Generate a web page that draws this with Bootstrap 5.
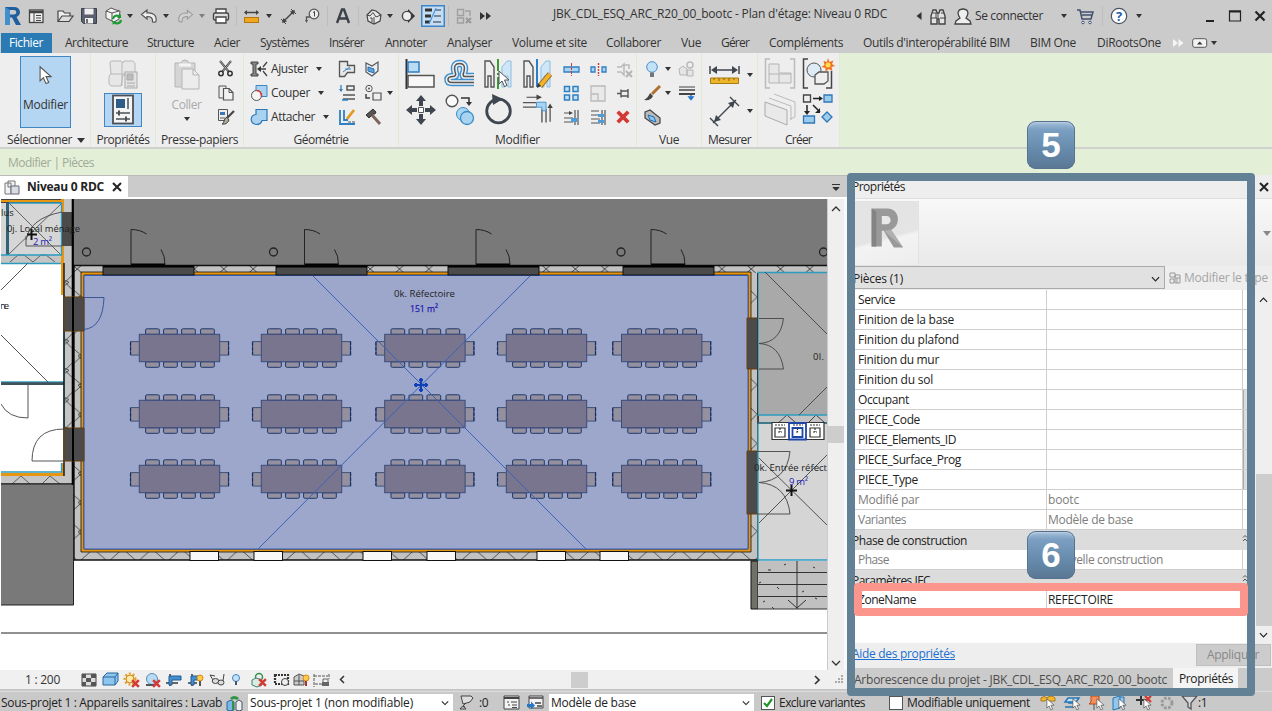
<!DOCTYPE html>
<html lang="fr">
<head>
<meta charset="utf-8">
<meta name="viewport" content="width=device-width, initial-scale=1">
<title>Plan d'étage: Niveau 0 RDC</title>
<link href="https://cdn.jsdelivr.net/npm/bootstrap@5.3.0/dist/css/bootstrap.min.css" rel="stylesheet">
<style>
body{width:1272px;height:711px;overflow:hidden;font:12px/16px "Open Sans","Noto Sans",sans-serif;color:#333;background:#cbcbcb}
svg{display:block;overflow:visible;flex:none}
[data-w]{white-space:nowrap;display:inline-block;justify-self:start}
.titlebar{height:32px;padding-left:4px;display:grid;align-items:center;grid-template-columns:24px 28px 24px 24px 23px 13px 23px 14px 22px 13px 24px 7px 23px 14px 24px 23px 9px 22px 8px 21px 13px 21px 27px 8px 23px 74px 362px 14px 25px 21px 86px 15px 26px 8px 26px 69px 23px 26px 18px;background:#cbcbcb}
.caret{width:0;height:0;border:3px solid transparent;border-top:4px solid #333;border-bottom:0;display:block}
.vsep{width:1px;height:20px;background:#bdbdbd}
.tabrow{height:21px;display:grid;align-items:center;padding-left:1px;grid-template-columns:64px 82px 67px 46px 69px 56px 62px 65px 94px 75px 40px 48px 94px 167px 67px 75px 20px 19px 1fr}
.tabrow .filetab{background:#2a7ab4;color:#fff;width:51px;height:20px;padding:2px 0 0 8px}
.ribbon{height:96px;background:#e4efd7;border-bottom:2px solid #cfd1ce}
.pane{background:#eee;border-right:1px solid #e0ebd3;height:94px;padding-top:3px}
.pane-title{height:16px;margin-top:auto;margin-bottom:-1px;text-align:center}
.tools{height:75px}
.on{background:#b5d6f2;border:1px solid #4087c4}
.big{display:grid;grid-template-columns:repeat(4,39px);grid-auto-rows:36px;padding:2px 0 0 6px}
.small3{display:grid;grid-template-columns:repeat(3,26.5px);grid-auto-rows:24px;align-items:center;padding-top:1px}
.small2{display:grid;grid-template-columns:repeat(2,25px);grid-auto-rows:24px;align-items:center;padding-top:1px}
.optbar{height:26px;background:#e4efd7;color:#a0aa98;padding:6px 0 0 8px}
.doc{width:848px}
.doctabs{height:24px;background:#cbcbcb;border-top:1px solid #bbb;border-bottom:2px solid #fff}
.doctab{width:128px;background:#fff;color:#222;padding:1px 0 0 4px}
.plan{width:827px;height:471px;background:#fff;overflow:hidden}
.vscroll{width:16px;background:#efefef;margin-left:1px}
.viewbar{height:20px;background:#f0f0f0;border-bottom:1px solid #c4c4c4;display:grid;align-items:center;padding-left:25px;grid-template-columns:56px 21px 21px 22px 20px 22px 22px 22px 20px 22px 20px 20px 26px 232px 243px 21px 1fr}
.props{width:424px;background:#eee;color:#222}
.prev{height:68px;background:linear-gradient(#f8f8f8,#e9e9e9);border-top:1px solid #ddd}
.thumb{width:67px;border:1px solid #e3e3e3;background:linear-gradient(165deg,#e4e4e4 55%,#f3f3f3 60%,#ededed)}
.sel{width:317px;background:#e1e1e1;border:1px solid #aaa;padding:2px 0 0 4px}
.rows{width:400px;background:#fff;padding-left:6px}
.prow{height:20px;border-bottom:1px solid #cfcfcf;display:grid;grid-template-columns:193px 196px 1fr;line-height:19px}
.prow>*{border-right:1px solid #cfcfcf;padding-left:4px}
.prow>:nth-child(2){padding-left:1px}
.prow>:last-child{border:0}
.prow.dim{color:#7d7d7d}
.prow.bt>:last-child{background:#ddd;border-left:1px solid #aaa}
.phead{height:20px;background:#dcdcdc;line-height:21px;margin-left:-6px;padding-left:4px}
.frame1{left:847px;top:173px;width:408px;height:523px;border:8px solid #638195;border-radius:4px}
.frame2{left:854px;top:583px;width:394px;height:33px;border:8px solid #fc958c;border-radius:4px}
.key{left:1027px;width:48px;height:48px;border-radius:9px;background:linear-gradient(#a9c2dc,#7b9fc2 18%,#6488a9 65%,#5a7793);box-shadow:inset 0 0 0 1px #55738f,inset 0 2px 2px #bdd0e4;color:#fff;font:bold 35px/48px "Liberation Sans",sans-serif;text-align:center}
.k5{top:121px}.k6{top:531px}
.status{height:20px;border-top:1px solid #dcdcdc;background:#c9c9c9;display:grid;align-items:center;padding:2px 0 0 1px;color:#222;grid-template-columns:225px 22px 211px 20px 24px 24px 22px 212px 18px 110px 18px 133px 24px 24px 24px 24px 24px 21px 17px 1fr}
.combo{height:18px;background:#fff;width:205px;padding:0 4px 0 2px}
.cb{width:14px;height:14px;background:#fff;border:1px solid #555}
</style>
</head>
<body>
<svg width="0" height="0" class="position-absolute">
<defs>
<symbol id="cur" viewBox="0 0 12 18"><path d="M1 1v13l3-3 2.500 5.500 2.500-1L6.500 10H11z" fill="#fff" stroke="#555"/></symbol>
<symbol id="redx" viewBox="0 0 8 8"><path d="M1 1l6 6M7 1L1 7" stroke="#d33a35" stroke-width="2.200"/></symbol>
<symbol id="chev" viewBox="0 0 10 6"><path d="M1 1l4 4 4-4" fill="none" stroke="currentColor" stroke-width="1.300"/></symbol>
<symbol id="fold" viewBox="0 0 6 8"><path d="M1 3.500l2-2 2 2M1 7l2-2 2 2" fill="none" stroke="#555"/></symbol>
<pattern id="hx" width="29.3" height="9" x="182.500" y="265" patternUnits="userSpaceOnUse"><path d="M7.500 8l9-8M16.500 8l-9-8" stroke="#333" stroke-width=".9" fill="none"/></pattern>
<pattern id="hb" width="29.3" height="9" x="81" y="551" patternUnits="userSpaceOnUse"><path d="M0 9L10 0h5l10 9" stroke="#333" stroke-width=".8" fill="none"/></pattern>
<pattern id="hv" width="9" height="29.3" x="74" y="344" patternUnits="userSpaceOnUse"><path d="M0 5l8 7-8 7M8 10l-4 2 4 3" stroke="#333" stroke-width=".8" fill="none"/></pattern>
<pattern id="hl" width="9" height="29.3" x="64" y="329" patternUnits="userSpaceOnUse"><path d="M8 5l-7 7 7 7M1 10l4 2-4 3" stroke="#333" stroke-width=".8" fill="none"/></pattern>
<pattern id="hr" width="9" height="29.3" x="749" y="285" patternUnits="userSpaceOnUse"><path d="M0 4l8 8-8 8" stroke="#333" stroke-width=".8" fill="none"/></pattern>
<g id="seat"><path d="M.3 5.500V.8Q.3 0 2 0h10q2 0 2 .8v4.700z" fill="#94909f" stroke="#1e3769" stroke-width="1"/></g>
<g id="tbl">
<use href="#seat" x="6" y="-5.500"/><use href="#seat" x="24" y="-5.500"/><use href="#seat" x="42" y="-5.500"/><use href="#seat" x="61" y="-5.500"/>
<g transform="translate(0 33) scale(1 -1)"><use href="#seat" x="6"/><use href="#seat" x="24"/><use href="#seat" x="42"/><use href="#seat" x="61"/></g>
<path d="M0 7.300h-8.700v13.500H0M80.400 7.300h8.700v13.500h-8.700" fill="#94909f" stroke="#35486f" stroke-width=".9"/><path d="M-8.800 7.500v13M89.300 7v14" stroke="#132d65" stroke-width="1.200" stroke-dasharray="4 1"/>
<rect width="80.400" height="27.400" fill="#79758f" stroke="#3a4c7b"/>
</g>
<g id="door"><path d="M0 35V0q9 0 15.500 4.500M30 20q4 6 4 15" fill="none" stroke="#222"/><path d="M0 35h34" stroke="#000" stroke-width="2"/></g>
<g id="win"><rect width="91" height="9" fill="#4b4b4b" stroke="#111"/><path d="M0 .5h91" stroke="#000" stroke-width="2"/></g>
</defs></svg>

<header class="titlebar">
<svg width="18" height="20" viewBox="0 0 18 20"><path d="M1 1h9c7 0 8 8 2.500 10L17 19h-5L8 11.500H6V19H1z" fill="#1e5fa0"/><path d="M6 4h4c3 0 3 4.500 0 4.500H6z" fill="#cbcbcb"/><path d="M1 1l5 3v15H1z" fill="#3f8fcf"/></svg>
<svg width="17" height="17" viewBox="0 0 17 17"><rect x="1.500" y="2" width="13.500" height="12.500" fill="#eee" stroke="#444" stroke-width="1.300"/><path d="M1.500 4h13.500" stroke="#444" stroke-width="2.500"/><path d="M6 5v9M8 7.500h5M8 10h5M8 12.500h5" stroke="#444"/></svg>
<svg width="18" height="16" viewBox="0 0 18 16"><path d="M2 13V3h5l1.500 2H14v3" fill="#eee" stroke="#444" stroke-width="1.200"/><path d="M2 13.500L6 8h11l-4 5.500z" fill="#ddd" stroke="#444" stroke-width="1.200"/></svg>
<svg width="18" height="18" viewBox="0 0 18 18"><path d="M1.500 1.500h15v15h-13l-2-2z" fill="#5a6070" stroke="#3b404a"/><path d="M4.500 1.500h9v6h-9zM5 11h8v5.500H5z" fill="#eee"/><path d="M7 12v4" stroke="#444" stroke-width="1.500"/></svg>
<svg width="19" height="18" viewBox="0 0 19 18"><path d="M2 4l5-3 5 2 4 1-1 8-5 3-8-4z" fill="#f4f4f4" stroke="#555"/><path d="M2 4l6 2 7-2M8 6v8" stroke="#555" fill="none"/><path d="M9 12a4 4 0 017-2M17 13a4 4 0 01-7 2" stroke="#1d9a36" stroke-width="2.200" fill="none"/><path d="M17 7v4h-4zM8.500 18v-4h4z" fill="#1d9a36"/></svg>
<i class="caret"></i>
<svg width="18" height="16" viewBox="0 0 18 16"><path d="M1.500 6.500L7 2v3c6-.5 10 2 9 8.500-1.500 1-2.500 1-3.500.3C13 10 11 8.500 7 8.500V11z" fill="#eee" stroke="#555" stroke-width="1.200"/></svg>
<i class="caret"></i>
<svg width="17" height="16" viewBox="0 0 18 16"><path d="M16.500 6.500L11 2v3C5 4.500 1 7 2 13.500c1.500 1 2.500 1 3.500.3C5 10 7 8.500 11 8.500V11z" fill="#d2d2d2" stroke="#999" stroke-width="1.100"/></svg>
<i class="caret opacity-50"></i>
<svg width="18" height="18" viewBox="0 0 18 18"><path d="M4 6V2h10v4" fill="#fff" stroke="#444" stroke-width="1.300"/><rect x="1.500" y="6" width="15" height="7" rx="1.500" fill="#ddd" stroke="#444" stroke-width="1.400"/><path d="M4 10h10v6H4z" fill="#fff" stroke="#444" stroke-width="1.300"/></svg>
<i class="vsep"></i>
<svg width="17" height="16" viewBox="0 0 17 16"><path d="M2 4.500h13" stroke="#444" stroke-width="1.500"/><path d="M4 2L1 4.500 4 7zM13 2l3 2.500L13 7z" fill="#444"/><rect x="1.500" y="9.500" width="14" height="5" fill="#f0a61e" stroke="#b5770c"/></svg>
<i class="caret"></i>
<svg width="17" height="17" viewBox="0 0 17 17"><path d="M3 14L14 3" stroke="#444" stroke-width="1.500"/><path d="M1 11l5 5M11 1l5 5" stroke="#444"/><path d="M2 15l1.500-5 3.500 3.500zM15 2l-1.500 5L10 3.500z" fill="#444"/></svg>
<svg width="16" height="17" viewBox="0 0 16 17"><circle cx="10" cy="6" r="4.800" fill="#eee" stroke="#555" stroke-width="1.200"/><path d="M10.500 3.500v5M9 4.500l1.500-1" stroke="#444"/><path d="M1 12l1.500 3L4 12z" fill="#555"/><path d="M6 9H2.500v4" stroke="#555" fill="none" stroke-width="1.300"/></svg>
<i class="vsep"></i>
<svg width="14" height="16" viewBox="0 0 14 16"><path d="M1 15L6 1.500h2L13 15M3 10.500h8" fill="none" stroke="#3c4048" stroke-width="2.400"/></svg>
<i class="vsep"></i>
<svg width="16" height="17" viewBox="0 0 16 17"><path d="M1 7l5-5 4 1 5 4-1 6-6 3-6-3z" fill="#e8e8e8" stroke="#444" stroke-width="1.200"/><path d="M1 7l3 1 3-3.500 3 4.500 5-2M8 16V9M4 10h2v4" stroke="#444" fill="none"/></svg>
<i class="caret"></i>
<svg width="16" height="16" viewBox="0 0 16 16"><path d="M8 1l7 7-7 7z" fill="#333"/><circle cx="7" cy="8" r="4.600" fill="#eee" stroke="#444" stroke-width="1.400"/></svg>
<svg width="24" height="22" viewBox="0 0 24 22"><rect x=".75" y=".75" width="22.500" height="20.500" fill="#c5def5" stroke="#3f84c6" stroke-width="1.500"/><path d="M4 5h7M4 11h6M4 17h5" stroke="#333" stroke-width="3"/><path d="M14 5h6M13 11h7M12 17h8" stroke="#333" stroke-width="1.200"/><path d="M15 3L8 19" stroke="#4c9ade" stroke-width="1.200"/></svg>
<i class="vsep"></i>
<svg width="17" height="17" viewBox="0 0 17 17"><path d="M1.500 1.500h6v6h-6zM1.500 10h6v5h-6zM9 3h5v5" fill="none" stroke="#a0a0a0" stroke-width="1.400"/><path d="M10 10l5 5M15 10l-5 5" stroke="#999" stroke-width="2"/></svg>
<svg width="12" height="8" viewBox="0 0 12 8"><path d="M1 0l5 4-5 4zM7 0l5 4-5 4z" fill="#333"/></svg>
<span data-w="334" class="mb-1">JBK_CDL_ESQ_ARC_R20_00_bootc - Plan d'étage: Niveau 0 RDC</span>
<svg width="8" height="8" viewBox="0 0 8 8"><path d="M6.500 0v8l-5-4z" fill="#333"/></svg>
<svg width="19" height="17" viewBox="0 0 19 17"><path d="M2 16V8l2-6h3l1 3h2l1-3h3l2 6v8h-6v-5H8v5z" fill="#e3e3e3" stroke="#444" stroke-width="1.400"/><path d="M2 10h6M11 10h6M4 5h3v5M12 5h3M9 5v6" stroke="#444" fill="none"/></svg>
<svg width="18" height="17" viewBox="0 0 18 17"><path d="M6 10C2 4 5 1 9 1s7 3 3 9l4 3 1 3H1l1-3z" fill="#eee" stroke="#444" stroke-width="1.300"/></svg>
<span data-w="68">Se connecter</span>
<i class="caret"></i>
<svg width="18" height="17" viewBox="0 0 18 17"><path d="M1 2h3l2 9h9l2-7H5M6 7h10" fill="none" stroke="#435070" stroke-width="1.500"/><circle cx="7" cy="14.500" r="1.300" fill="#fff" stroke="#435070"/><circle cx="14" cy="14.500" r="1.300" fill="#fff" stroke="#435070"/></svg>
<i class="vsep"></i>
<svg width="18" height="18" viewBox="0 0 18 18"><circle cx="9" cy="9" r="7.700" fill="#fff" stroke="#4a5262" stroke-width="1.200"/><text x="9" y="13.500" font-size="13" font-weight="700" fill="#2460b0" text-anchor="middle">?</text></svg>
<i class="caret"></i>
<svg width="10" height="12" viewBox="0 0 10 12"><path d="M1 11h8" stroke="#222" stroke-width="2"/></svg>
<svg width="14" height="14" viewBox="0 0 14 14"><path d="M1.500 2h11v10h-11z" fill="none" stroke="#222" stroke-width="1.200"/><path d="M1 2.500h12" stroke="#222" stroke-width="2"/></svg>
<svg width="12" height="12" viewBox="0 0 12 12"><path d="M1.500 1.500l9 9M10.500 1.500l-9 9" stroke="#222" stroke-width="2.200"/></svg>
</header>

<nav class="tabrow">
<div class="filetab"><span data-w="34">Fichier</span></div>
<span data-w="63">Architecture</span><span data-w="47">Structure</span><span data-w="26">Acier</span><span data-w="49">Systèmes</span><span data-w="35">Insérer</span><span data-w="42">Annoter</span><span data-w="45">Analyser</span><span data-w="75">Volume et site</span><span data-w="55">Collaborer</span><span data-w="20">Vue</span><span data-w="28">Gérer</span><span data-w="74">Compléments</span><span data-w="147">Outils d'interopérabilité BIM</span><span data-w="46">BIM One</span><span data-w="64">DiRootsOne</span>
<svg width="12" height="8" viewBox="0 0 12 8"><path d="M1 0l5 4-5 4zM6.500 0l5 4-5 4z" fill="#f6f6f6"/></svg>
<svg width="16" height="10" viewBox="0 0 16 10"><rect x=".7" y=".7" width="14" height="8.600" rx="2" fill="#f3f3f3" stroke="#555"/><path d="M5 6.500h5.500L7.700 3.500z" fill="#333"/></svg>
<i class="caret ms-0"></i>
</nav>

<section class="ribbon d-flex">
<div class="pane d-flex flex-column" style="width:91px">
<div class="tools"><div class="on d-flex flex-column align-items-center" style="width:51px;height:72px;margin-left:20px"><svg class="mt-2" width="13" height="21"><use href="#cur"/></svg><span data-w="45" style="margin-top:11px">Modifier</span></div></div>
<div class="pane-title d-flex align-items-center" style="padding-left:7px"><span data-w="65">Sélectionner</span><i class="caret" style="margin-left:5px;border-width:5px 4px 0"></i></div></div>
<div class="pane d-flex flex-column align-items-center" style="width:65px">
<div class="tools d-flex flex-column align-items-center pt-1"><svg width="30" height="30" viewBox="0 0 30 30"><path d="M2 3q0-2 2-2h9l2 2 1-2h9l2 2v10l-2 2H15l-2 11H3l-2-2V16l2-2z" fill="#e7e7e7" stroke="#b8b8b8"/><path d="M2 14h25M14 2v24" stroke="#b8b8b8"/><rect x="17" y="12" width="12" height="16" fill="#e3e3e3" stroke="#aaa"/><path d="M19 14h6v6h-6zM19 23h8M19 26h8" stroke="#aaa" fill="#bbb"/></svg>
<div class="on mt-1 d-flex justify-content-center" style="width:38px;height:34px;margin-top:3px!important"><svg width="22" height="31" viewBox="0 0 22 31"><rect x="1" y="1.500" width="20" height="28" fill="#f4f4f4" stroke="#4c5057" stroke-width="1.800"/><path d="M4 5h9v9H4z" fill="#2f5b88"/><path d="M16 4v11M4 19h14M4 25h14" stroke="#4c5057" stroke-width="1.500"/><path d="M7 16.500v5M14 22.500v5" stroke="#4c5057" stroke-width="2"/></svg></div></div>
<div class="pane-title"><span data-w="53">Propriétés</span></div></div>
<div class="pane d-flex flex-column align-items-center" style="width:88px">
<div class="tools d-flex w-100"><div class="d-flex flex-column align-items-center" style="width:61px;padding-top:3px;color:#aaa"><svg width="28" height="32" viewBox="0 0 28 32"><path d="M2 4h6q1-3 4-3t4 3h6v24H2z" fill="#d5d5d5" stroke="#b5b5b5"/><path d="M6 6h12" stroke="#f4f4f4" stroke-width="3"/><path d="M9 10h11l6 6v14H9z" fill="#ececec" stroke="#b5b5b5"/><path d="M20 10v6h6" fill="none" stroke="#b5b5b5"/></svg><span data-w="30" style="margin-top:6px">Coller</span><i class="caret mt-1"></i></div>
<div class="small2" style="grid-template-columns:24px"><svg width="18" height="18" viewBox="0 0 18 18"><path d="M3 1l9 11M14 1L5 12" stroke="#444" stroke-width="2"/><path d="M3 1l9 11M14 1L5 12" stroke="#ddd" stroke-width=".6"/><circle cx="4" cy="13.500" r="2.200" fill="none" stroke="#333" stroke-width="1.500"/><circle cx="13" cy="13.500" r="2.200" fill="none" stroke="#333" stroke-width="1.500"/></svg>
<svg width="18" height="18" viewBox="0 0 18 18"><path d="M2 2h7v12H2z" fill="#eee" stroke="#555"/><path d="M6.500 4.500H12l4 4V16H6.500z" fill="#f2f2f2" stroke="#555" stroke-width="1.200"/><path d="M12 4.500v4h4" stroke="#555" fill="none"/></svg>
<svg width="18" height="18" viewBox="0 0 18 18"><path d="M1.500 1.500h9v11h-9z" fill="#eee" stroke="#555"/><path d="M3 4h5v3H3z" fill="#3a78b5"/><path d="M3 10h5" stroke="#555"/><path d="M17 3L9 11" stroke="#444" stroke-width="2.200"/><path d="M10 9l2 3q-2 5-7 4 2-1 2-3t3-4z" fill="#a9a9a0" stroke="#444"/></svg></div></div>
<div class="pane-title"><span data-w="77">Presse-papiers</span></div></div>
<div class="pane d-flex flex-column align-items-center" style="width:155px">
<div class="tools d-flex w-100">
<div class="small2" style="grid-template-columns:21px 67px;padding-left:6px">
<svg width="18" height="18" viewBox="0 0 18 18"><path d="M1 2h7v2H6v10h2v2H1v-2h2V4H1z" fill="#888" stroke="#444"/><path d="M17 2l-4 5M17 16l-4-5M9 9h7" stroke="#444" stroke-width="1.300"/><path d="M11 6v6L7 9z" fill="#333"/></svg>
<div class="d-flex align-items-center gap-2"><span data-w="37">Ajuster</span><i class="caret"></i></div>
<svg width="18" height="18" viewBox="0 0 18 18"><path d="M6 1.500h11v11H6z" fill="#a9d2f0" stroke="#3d85c0"/><circle cx="6.500" cy="11.500" r="5" fill="#f5f5f5" stroke="#555"/><path d="M6.500 6.500q5 0 5 6" stroke="#d33" stroke-width="1.500" fill="none"/></svg>
<div class="d-flex align-items-center gap-2"><span data-w="39">Couper</span><i class="caret"></i></div>
<svg width="18" height="18" viewBox="0 0 18 18"><path d="M6 1.500h11v11h-5q-1 4-5.500 4Q1 16 1.200 11 1.500 7 6 6.500z" fill="#a9d2f0" stroke="#2f78b8" stroke-width="1.200"/></svg>
<div class="d-flex align-items-center gap-2"><span data-w="44">Attacher</span><i class="caret"></i></div></div>
<div class="small2" style="grid-template-columns:26px 23px 12px">
<svg width="18" height="18" viewBox="0 0 18 18"><path d="M1.500 1.500h8v4h7v7h-7l-3 4h-5z" fill="#e9e9e9" stroke="#555" stroke-width="1.300"/><path d="M5 12l7-5M7 9h6" stroke="#3d85c0"/></svg>
<svg width="18" height="18" viewBox="0 0 18 18"><path d="M2 3l6 3 6-4v9l-6 5-6-4z" fill="#e8eef4" stroke="#555" stroke-width="1.200"/><path d="M4 7l6 2v4l-6-2z" fill="#5aa5e0" stroke="#2b6ca8"/></svg><i></i>
<svg width="18" height="18" viewBox="0 0 18 18"><path d="M5 11h12M5 15h12M9 2h7v4H9z" stroke="#555" stroke-width="1.500" fill="none"/><path d="M3 1v6M4 16h6" stroke="#2c80c8" stroke-width="1.300"/><path d="M1 5l2 3 2-3z" fill="#2c80c8"/></svg>
<svg width="18" height="18" viewBox="0 0 18 18"><circle cx="5" cy="4.500" r="3.200" fill="#eee" stroke="#555"/><circle cx="5" cy="4.500" r="1" fill="#555"/><path d="M9 9h8v7H9z" fill="#eee" stroke="#555" stroke-width="1.200"/><path d="M2 10v4h4" fill="none" stroke="#444" stroke-width="1.500"/></svg><i class="caret"></i>
<svg width="18" height="18" viewBox="0 0 18 18"><path d="M2 2v14h15M6 2v10h4" stroke="#2c80c8" stroke-width="1.800" fill="none"/><path d="M16 2l-7 9" stroke="#e29a22" stroke-width="2.800"/><path d="M10 14h7" stroke="#555" stroke-dasharray="3 1"/></svg>
<svg width="18" height="18" viewBox="0 0 18 18"><path d="M2 7l7-6 3 3-1 2-2 0-4 4z" fill="#555" stroke="#333"/><path d="M8 7l8 9" stroke="#7c6659" stroke-width="3"/></svg></div></div>
<div class="pane-title"><span data-w="55">Géométrie</span></div></div>
<div class="pane d-flex flex-column align-items-center" style="width:238px">
<div class="tools d-flex w-100"><div class="big">
<svg width="32" height="32" viewBox="0 0 32 32"><path d="M1.500 1v30" stroke="#333" stroke-width="2"/><path d="M3 4h11v10H3z" fill="#b9dcf4" stroke="#2f7fc0" stroke-width="1.500"/><path d="M3 17.500h26V29H3z" fill="#f7f7f7" stroke="#555" stroke-width="1.500"/></svg>
<svg width="32" height="32" viewBox="0 0 32 32"><g fill="none"><path id="off" d="M30 18.500h-9q-3 0-1-5 2-8-4.500-8t-4.500 8q2 5-2 5-5 0-5 3T8 24.500h22" stroke="#3f92d0" stroke-width="7.500"/><path d="M31 18.500H21q-3 0-1-5 2-8-4.500-8t-4.500 8q2 5-2 5-5 0-5 3T8 24.500h23" stroke="#eee" stroke-width="4.600"/><path d="M30 18.500h-9q-3 0-1-5 2-8-4.500-8t-4.500 8q2 5-2 5-5 0-5 3T8 24.500h22" stroke="#555" stroke-width="1.500"/></g></svg>
<svg width="32" height="32" viewBox="0 0 32 32"><path d="M2 3h5l4 6v20H8V18H5v11H2z" fill="#eee" stroke="#555" stroke-width="1.400"/><path d="M28 3h-4l-5 6v20h3V18h3v11h3z" fill="#cfe6f6" stroke="#8cbde0"/><path d="M15 1v30" stroke="#3a9a34" stroke-width="2" stroke-dasharray="12 2 2 2"/><use href="#cur" x="15" y="12" width="12" height="18"/></svg>
<svg width="32" height="32" viewBox="0 0 32 32"><path d="M2 3h5l4 6v20H8V18H5v11H2z" fill="#eee" stroke="#555" stroke-width="1.400"/><path d="M28 3h-4l-5 6v20h3V18h3v11h3z" fill="#cfe6f6" stroke="#8cbde0"/><path d="M15 1v28" stroke="#2b7fc8" stroke-width="2"/><path d="M28 16L18 28" stroke="#8a5a10" stroke-width="5.500"/><path d="M28 16L18 28" stroke="#f2b32c" stroke-width="4"/><path d="M15 30l1-5 3 3z" fill="#333"/></svg>
<svg width="32" height="32" viewBox="0 0 32 32"><path d="M16 1l5 6h-3v5h-4V7h-3zM16 31l5-6h-3v-5h-4v5h-3zM1 16l6-5v3h5v4H7v3zM31 16l-6-5v3h-5v4h5v3z" fill="#3f464f"/><path d="M13.500 13.500h5v5h-5z" fill="#fff" stroke="#555"/></svg>
<svg width="32" height="32" viewBox="0 0 32 32"><circle cx="8" cy="7" r="5.800" fill="#fafafa" stroke="#555" stroke-width="1.400"/><circle cx="19" cy="20" r="6.500" fill="#a8d4f1" stroke="#3d8bc6"/><circle cx="23" cy="24" r="6.500" fill="#a8d4f1" stroke="#3d8bc6" stroke-width="1.300"/><path d="M17 4h8v6" stroke="#333" stroke-width="1.500" fill="none"/><path d="M22 8h6l-3 4z" fill="#333"/></svg>
<svg width="32" height="32" viewBox="0 0 32 32"><circle cx="15.500" cy="17" r="11.800" fill="none" stroke="#3f464f" stroke-width="2.800"/><path d="M9 0l11 5-10 6z" fill="#3f464f"/></svg>
<svg width="29" height="30" viewBox="0 0 32 32"><path d="M1 9h15M1 14h15M22 16v15M26.500 16v15" stroke="#555" stroke-width="1.500"/><path d="M16 8.500h10.500V18H22v-4h-6z" fill="#a8d4f1" stroke="#3f92d0"/><path d="M5 3h14M31 30V13" stroke="#444" stroke-width="1.300"/><path d="M16 0l6 3-6 3zM28 15l3-5 3 5z" fill="#444"/></svg>
</div><div class="small3 ps-1" style="margin-left:-2px">
<svg width="17" height="17" viewBox="0 0 17 17"><path d="M1 6h15v5H1z" fill="#a8d4f1" stroke="#2f7fc0" stroke-width="1.300"/><path d="M8.500 2v13" stroke="#d33a35" stroke-dasharray="3 1"/></svg>
<svg width="17" height="17" viewBox="0 0 17 17"><path d="M1 6h4v5H1zM12 6h4v5h-4z" fill="#a8d4f1" stroke="#2f7fc0" stroke-width="1.300"/><path d="M8.500 2v13" stroke="#d33a35" stroke-width="1.400" stroke-dasharray="2 1"/></svg>
<svg width="17" height="17" viewBox="0 0 17 17"><path d="M1 6h4l3-3v11l-3-3H1M8 4h5v4" stroke="#bbb" stroke-width="1.500" fill="none"/><path d="M10 10l6 6M16 10l-6 6" stroke="#b5b5b5" stroke-width="2"/></svg>
<svg width="17" height="17" viewBox="0 0 17 17"><path d="M1.500 1.500h5v5h-5zM10 1.500h5v5h-5zM1.500 10h5v5h-5zM10 10h5v5h-5z" fill="#c5e1f5" stroke="#2f7fc0" stroke-width="1.500"/></svg>
<svg width="17" height="17" viewBox="0 0 17 17"><path d="M1 1h14v15H1zM1 9h7v7" stroke="#bbb" stroke-width="1.300" fill="#e9e9e9"/></svg>
<svg width="17" height="17" viewBox="0 0 17 17"><path d="M1 8.500h4M5 4.500v8M5 6h7M5 11h7M12 4v9" stroke="#555" stroke-width="1.400" fill="none"/></svg>
<svg width="17" height="17" viewBox="0 0 17 17"><path d="M1 4h6M1 9h9M1 13h9M15 1v15M12 1v15" stroke="#555" stroke-width="1.200"/><path d="M8 9h6v4H8z" fill="#4e9ddb"/><path d="M6 2l4 2-4 2z" fill="#444"/></svg>
<svg width="17" height="17" viewBox="0 0 17 17"><path d="M1 2h8M1 6h9M1 10h9M1 14h9M15 1v15M12 1v15" stroke="#555" stroke-width="1.200"/><path d="M8 5h6v3H8zM8 11h6v3H8z" fill="#4e9ddb"/></svg>
<svg width="14" height="14" viewBox="0 0 8 8"><use href="#redx"/></svg>
</div></div><div class="pane-title"><span data-w="45">Modifier</span></div></div>
<div class="pane d-flex flex-column align-items-center" style="width:65px">
<div class="tools w-100"><div class="small2" style="grid-template-columns:21px 13px 20px;padding-left:7px">
<svg width="17" height="17" viewBox="0 0 17 17"><circle cx="8" cy="6" r="5.300" fill="#c2e2fa" stroke="#4a90c8"/><path d="M6 11.500h4V16H6z" fill="#777"/></svg><i class="caret"></i>
<svg width="18" height="17" viewBox="0 0 18 17"><path d="M1 8l4-3 4 3v6H2zM9 9h6v6H9z" fill="#e5e5e5" stroke="#b5b5b5"/><circle cx="12" cy="4" r="3" fill="none" stroke="#bbb" stroke-width="1.500"/></svg>
<svg width="17" height="17" viewBox="0 0 17 17"><path d="M16 1L8 9" stroke="#b0702f" stroke-width="3"/><path d="M6 8l3 3q-2 5-9 4 4-2 6-7z" fill="#444"/></svg><i class="caret"></i>
<svg width="18" height="17" viewBox="0 0 18 17"><path d="M1 2h16" stroke="#444"/><path d="M1 5h16" stroke="#444" stroke-width="1.500"/><path d="M1 9h16" stroke="#444" stroke-width="2"/><path d="M13 10v3M11 12h4l-2 2.500z" fill="#2276cc" stroke="#2276cc" stroke-width="1.500"/></svg>
<svg width="17" height="17" viewBox="0 0 17 17"><path d="M1 3l5-2 10 8v5l-5 2L1 9z" fill="#bbb" stroke="#444" stroke-width="1.200"/><path d="M4 6l6 2 2 5-6-2z" fill="#8cc4ee" stroke="#1f6fb4"/></svg></div></div>
<div class="pane-title"><span data-w="20">Vue</span></div></div>
<div class="pane d-flex flex-column align-items-center" style="width:56px">
<div class="tools w-100 small2" style="grid-template-columns:38px 10px;grid-auto-rows:36px;padding-left:7px">
<svg width="31" height="20" viewBox="0 0 31 20"><path d="M1 1v8M30 1v8M4 5h23" stroke="#3f464f" stroke-width="1.500"/><path d="M8 1L2 5l6 4zM23 1l6 4-6 4z" fill="#3f464f"/><path d="M1.500 13h28v5.500h-28z" fill="#eeb42a" stroke="#a87a12"/><path d="M5 13v2M10 13v3M15 13v2M20 13v3M25 13v2" stroke="#8a6208"/></svg><i class="caret"></i>
<svg width="31" height="31" viewBox="0 0 31 31"><path d="M4 27L27 4M1 22l8 8M21 1l9 9" stroke="#3f464f" stroke-width="1.400"/><path d="M5 26l2-7 5 5zM26 5l-2 7-5-5z" fill="#3f464f"/></svg><i class="caret"></i></div>
<div class="pane-title"><span data-w="43">Mesurer</span></div></div>
<div class="pane d-flex flex-column align-items-center" style="width:82px">
<div class="tools w-100 big" style="grid-template-columns:38px 38px">
<svg width="32" height="32" viewBox="0 0 32 32"><path d="M6 1H1.500v29H6M26 1h4.500v29H26" fill="none" stroke="#bbb" stroke-width="1.500"/><path d="M5 6h10v9h12v10H5z" fill="#e7e7e7" stroke="#b5b5b5"/><path d="M5 16h10v9M15 16h12" stroke="#b5b5b5" fill="none"/></svg>
<svg width="32" height="32" viewBox="0 0 32 32"><path d="M6 1H1.500v29H6M24 30h5.500V13" fill="none" stroke="#444" stroke-width="1.500"/><circle cx="12" cy="12" r="7" fill="#dcebf5" stroke="#555"/><path d="M13 17l4-3h9v9l-4 3h-9z" fill="#eee" stroke="#555" stroke-width="1.300"/><path d="M26 0l1.500 4 4-1.500L30 6l3 2-3.500 1 1 4-4-2-3 3v-4l-4-1 3-2-1-4 3.500 1z" fill="#f27122"/><circle cx="26" cy="7" r="2.500" fill="#ffe14d"/></svg>
<svg width="32" height="32" viewBox="0 0 32 32"><path d="M10 0l21 8v15l-5 2M5 4l22 8v14" fill="#eee" stroke="#bbb"/><path d="M1 8l22 8v15L1 22z" fill="#e9e9e9" stroke="#aaa"/></svg>
<svg width="32" height="32" viewBox="0 0 32 32"><path d="M1.500 1h7v7h-7z" fill="#eee" stroke="#444" stroke-width="1.300"/><path d="M22 1h8v7h-8zM1.500 22h11v7h-11zM25 18l5 5-5 5-5-5z" fill="#9bcbed" stroke="#2f78b8" stroke-width="1.300"/><path d="M11 4.500h8M5 11v8M11 11l7 7" stroke="#222" stroke-width="1.500"/><path d="M17 2l4 2.500L17 7zM2 17h6l-3 4zM18 14v5h-5z" fill="#222"/></svg></div>
<div class="pane-title"><span data-w="27">Créer</span></div></div>
</section>
<div class="optbar"><span data-w="86">Modifier | Pièces</span></div>

<main class="d-flex" style="height:516px">
<section class="doc d-flex flex-column">
<div class="doctabs d-flex justify-content-between"><div class="doctab d-flex align-items-center"><svg width="16" height="15" viewBox="0 0 16 15"><path d="M1 3h6v11H1zM4 1h7v6H4z" fill="#f2f2f2" stroke="#777"/><path d="M7 6h8v8H7z" fill="#d8dde3" stroke="#667"/></svg><b data-w="77" style="margin-left:7px">Niveau 0 RDC</b><svg class="ms-2" width="10" height="10" viewBox="0 0 10 10"><path d="M1 1l8 8M9 1L1 9" stroke="#222" stroke-width="2"/></svg></div>
<svg style="margin-top:5px" width="17" height="14" viewBox="0 0 17 14"><path d="M1 3.500h8M2 6.500h6l-3 3z" fill="#333" stroke="#333"/></svg></div>
<div class="d-flex" style="height:471px">
<svg class="plan" viewBox="0 199 827 471" font-size="9.5" fill="#222">
<path d="M0 199h827v471H0z" fill="#fff"/>
<path d="M73 199h754v66H73z" fill="#797979"/>
<path d="M1 203h61v52H1z" fill="#d6d6d6"/><path d="M1 200h63v2H1z" fill="#e69610"/><path d="M1 199.500h61M1 202.500h61" stroke="#111" stroke-width=".8"/>
<path d="M64 199h9v285h-9zM1 255h63v8H1zM1 476h72v8H1z" fill="#c5c5c5"/>
<path d="M64 331h9v98h-9zM64 262h9v35h-9z" fill="url(#hl)"/>
<path d="M10 262l8-7h6l9 7 8-7h5l9 7M12 484l9-8 9 8M42 484l8-8 10 8M9 203l52 52M61 204L9 254" fill="none" stroke="#555" stroke-width=".9"/>
<path d="M61 199h3v13h-3zM61 246h3v49h-3zM1 473h63v3H1zM61 463h3v13h-3z" fill="#e69610"/>
<path d="M6 203h3v52H6z" fill="#2f6478"/><path d="M9 203h52.500v52H1M1 263.500h60M64 295v133M61.500 463v9H1M64 380v4" fill="none" stroke="#2b9cc0" stroke-width="1.300"/>
<path d="M62 212h11v34H62z" fill="#4b4b4b"/><path d="M1 382h63v3H1z" fill="#40525b"/><path d="M1 381.800h63" stroke="#2b9cc0"/>
<path d="M26 236v10h36M26 240q4-22 36-28M1 290l27-27M1 335l47 47M28 385v33q-20 0-27-14M64 429q-32 0-32 32h32" fill="none" stroke="#555"/>
<path d="M74 265h683v11H74zM74 265h10v295H74zM74 549h683v11H74zM748 265h10v295h-10z" fill="#c2c2c2"/>
<path d="M758 265h69v8h-69zM758 415h69v8h-69z" fill="#c2c2c2"/>
<path d="M74 265h753v8H74z" fill="url(#hx)"/><path d="M74 551h683v9H74z" fill="url(#hb)"/><path d="M74 276h8v270h-8z" fill="url(#hv)"/><path d="M749 276h8v274h-8z" fill="url(#hr)"/><path d="M778 423l9-8 9 8M808 423l8-8 9 8" fill="none" stroke="#444"/>
<path d="M81 272h670v280H81zM84 275v274h664V275z" fill="#e69610" fill-rule="evenodd" stroke="#111" stroke-width=".8"/>
<path d="M73 199v285M64 263v213M1 484h72M74 265.500h753M74 265v295h684V273" fill="none" stroke="#111" stroke-width="1.400"/><path d="M72.700 199v286" stroke="#000" stroke-width="2"/>
<path d="M84 275.500h664V549H84z" fill="#9da7cb" stroke="#315fbe"/>
<use href="#win" x="103" y="266"/><use href="#win" x="276" y="266"/><use href="#win" x="448" y="266"/><use href="#win" x="623" y="266"/>
<use href="#door" x="131" y="229.500"/><use href="#door" x="304.500" y="229.500"/><use href="#door" x="476" y="229.500"/><use href="#door" x="651" y="229.500"/>
<g fill="none" stroke="#222" stroke-width="1.300"><circle cx="86.500" cy="252" r="4"/><circle cx="273.500" cy="252" r="4"/><circle cx="621" cy="252" r="4"/><circle cx="823.500" cy="252" r="4"/></g>
<path d="M64 297h20v34H64zM64 428h20v33H64zM747 318h11v51h-11zM747 451h11v63h-11z" fill="#4b4b4b" stroke="#6a3e08"/><path d="M73 297v34M73 428v33" stroke="#000" stroke-width="2"/>
<path d="M84 297.500h20q-1 30-20 32" fill="none" stroke="#3b5597"/>
<g id="tables"></g>
<path d="M313 276l273 273M530 276L258 549" stroke="#3b62b8"/>
<path d="M421 378v14M414 385h14M419 380h4M419 390h4M416 383v4M426 383v4" stroke="#1040b5" stroke-width="2.200"/>
<text x="394" y="297" textLength="61" lengthAdjust="spacingAndGlyphs">0k. Réfectoire</text><text x="410" y="312" textLength="28" lengthAdjust="spacingAndGlyphs" fill="#231bad" stroke="#231bad" stroke-width=".25">151 m²</text>
<g id="sills" fill="#f8f8f8" stroke="#111"></g>
<path d="M758 272.500h69v142.500h-69z" fill="#a9a9a9"/><path d="M758 423h69v137h-69z" fill="#d5d5d5"/>
<path d="M827 272.500h-69V415h69M827 423h-69v137h69" fill="none" stroke="#2b9cc0" stroke-width="1.300"/><path d="M757 423h70M757.500 273v142" stroke="#222" stroke-width=".7"/>
<path d="M765 272l62 62M799 415l28-28M759 318.500h24.500q-3 24-24.500 25 21 1 24.500 25.500H759M757 451.500h33q-3 29-31 31 28 2 31 31.500h-33M759 458l68 67M827 455l-68 68" fill="none" stroke="#444" stroke-width=".9"/>
<g fill="#fff" stroke="#333" stroke-width="1.200"><path d="M772 422.500h52v17h-52z"/><path d="M775 428h10v9h-10zM810 428h10v9h-10z"/><path d="M789 423h17v16.500h-17zM792.500 428h10v9h-10z" stroke="#1e46a8" stroke-width="1.800"/><path d="M778 432h4M796 432h3M813 432h4M780 428v4M797.500 428v4M815 428v4M775 425h10M793 425h10M810 425h10" stroke-dasharray="2 1"/></g>
<text x="754" y="471" textLength="73" lengthAdjust="spacingAndGlyphs">0k. Entrée réfect</text><text x="789" y="485" fill="#231bad" textLength="19">9 m²</text><path d="M786 490.500h11M791.500 485v11" stroke="#111" stroke-width="2"/><text x="813" y="360" textLength="11">0l.</text>
<path d="M751 561h7v48h-7z" fill="#71716a" stroke="#111"/><path d="M758 561h69v48h-69z" fill="#c0c0c0"/><path d="M758 572.500h69M758 584.500h69M758 596.500h69M758 609h69M797 561v48M788 600l9 8 9-8" fill="none" stroke="#333"/><path d="M768 570h3M784 565l2-1M813 567l2 1M759 583l2-1M777 587l2 2M802 592l2-1M763 602l2-1M815 598l2 1M772 607l2 2" stroke="#333"/>
<path d="M1 485h72v120H1z" fill="#797979"/><path d="M1 605h72.500V485M1 633h826" fill="none" stroke="#222"/>
<text x="1" y="216">lus</text><text x="7" y="232" textLength="73" lengthAdjust="spacingAndGlyphs">0j. Local ménage</text><text x="33" y="245" fill="#231bad" textLength="19">2 m²</text><path d="M27 234.500h10M31.500 229v11" stroke="#111" stroke-width="2"/><text x="0" y="309" textLength="9">ne</text>
<path d="M.5 199v471" stroke="#fff"/>
</svg>
<div class="vscroll d-flex flex-column align-items-center"><svg width="10" height="6" style="margin-top:7px;transform:scaleY(-1)"><use href="#chev"/></svg><div style="width:16px;height:17px;margin-top:214px;background:#cdcdcd"></div><svg class="mt-auto mb-1" width="10" height="6"><use href="#chev"/></svg></div><div class="flex-fill bg-light"></div>
</div>
<div class="viewbar">
<span data-w="35">1 : 200</span>
<svg width="16" height="14" viewBox="0 0 16 14"><path d="M1 1h14v12H1z" fill="#ddd" stroke="#444"/><path d="M1 1h4v4H1zM10 1h5v4h-5zM5 5h5v4H5zM1 9h4v4H1zM10 9h5v4h-5z" fill="#555"/></svg>
<svg width="17" height="15" viewBox="0 0 17 15"><path d="M1 5l4-4h11v8l-3 4H1z" fill="#8dc5ee" stroke="#28679c"/><path d="M1 5h12v8M13 5l3-4" fill="none" stroke="#28679c"/></svg>
<svg width="17" height="16" viewBox="0 0 17 16"><circle cx="7" cy="7" r="5.500" fill="none" stroke="#e89c1a" stroke-width="2" stroke-dasharray="2 2"/><circle cx="7" cy="7" r="4" fill="#ffe9a8" stroke="#c88112"/><use href="#redx" x="8" y="7" width="9" height="9"/></svg>
<svg width="17" height="16" viewBox="0 0 17 16"><circle cx="7" cy="7" r="5.500" fill="#b8dcf5" stroke="#5a8db6"/><path d="M1 13h8" stroke="#555" stroke-width="2"/><use href="#redx" x="7" y="7" width="9" height="9"/></svg>
<svg width="17" height="16" viewBox="0 0 17 16"><path d="M5 2v12M1 11h12" stroke="#666" stroke-width="2"/><path d="M4 4h12v4H7v5H4z" fill="#438fd0" stroke="#205c93"/></svg>
<svg width="17" height="16" viewBox="0 0 17 16"><path d="M5 2v12M1 11h9" stroke="#666" stroke-width="2"/><path d="M4 4h8v4H7v5H4z" fill="#438fd0" stroke="#205c93"/><circle cx="13" cy="6" r="3" fill="#ffcb4a" stroke="#d88a12"/><path d="M13 9v5" stroke="#555" stroke-width="2"/></svg>
<svg width="17" height="16" viewBox="0 0 17 16"><path d="M1 3l3 5M1 3l5 1M15 2l-1 7" stroke="#444" fill="none"/><ellipse cx="6.500" cy="9" rx="3.300" ry="2.500" fill="#ddd" stroke="#444"/><ellipse cx="12" cy="10.500" rx="3" ry="2.500" fill="#ddd" stroke="#444"/></svg>
<svg width="10" height="15" viewBox="0 0 10 15"><circle cx="5" cy="6" r="3.500" fill="#c2e2fa" stroke="#4383bb"/><path d="M5 9v4" stroke="#456" stroke-width="2"/></svg>
<svg width="17" height="16" viewBox="0 0 17 16"><circle cx="8" cy="5" r="3.500" fill="none" stroke="#35914a" stroke-width="1.500"/><path d="M1 8l4-2 6 2v5l-5 2-5-2z" fill="#dcebdd" stroke="#387"/><use href="#redx" x="7" y="6" width="9" height="9"/></svg>
<svg width="17" height="16" viewBox="0 0 17 16"><path d="M2 3h13v9H2z" fill="none" stroke="#333" stroke-width="2.200" stroke-dasharray="2 1"/><circle cx="12" cy="10" r="3.500" fill="#eee" stroke="#444"/></svg>
<svg width="17" height="16" viewBox="0 0 17 16"><path d="M1 5l5-3 5 2v9H1zM1 9h10M6 3v10" fill="#ccc" stroke="#555"/><circle cx="13" cy="6" r="3" fill="#ffcb4a" stroke="#d88a12"/><path d="M13 9v5" stroke="#a33" stroke-width="2"/></svg>
<svg width="17" height="16" viewBox="0 0 17 16"><path d="M1 2v13M16 2v5M1 4h14M2 12h7" stroke="#555" stroke-dasharray="3 1"/><path d="M9 10h7v4H9z" fill="#666"/><path d="M10 10V7h5v3" fill="none" stroke="#666"/></svg>
<svg width="6" height="9" viewBox="0 0 6 9"><path d="M5 1L1.500 4.500 5 8" fill="none" stroke="#333" stroke-width="1.500"/></svg>
<div style="width:17px;height:16px;background:#cdcdcd"></div>
<svg width="7" height="10" viewBox="0 0 7 10"><path d="M1 1l4 4-4 4" fill="none" stroke="#333" stroke-width="1.700"/></svg>
<svg width="9" height="9" viewBox="0 0 9 9"><path d="M6 1h2M3 4h2M6 4h2M0 7h2M3 7h2M6 7h2" stroke="#aaa" stroke-width="2"/></svg>
</div></section>

<aside class="props d-flex flex-column">
<div class="d-flex align-items-center justify-content-between" style="height:23px;padding:1px 3px 0 4px"><span data-w="53">Propriétés</span><svg width="10" height="10" viewBox="0 0 10 10"><path d="M1 1l8 8M9 1L1 9" stroke="#222" stroke-width="2"/></svg></div>
<div class="prev d-flex justify-content-between align-items-center" style="padding:2px 1px 0 4px"><div class="thumb h-100 d-flex justify-content-center"><svg class="mt-1" width="37" height="44" viewBox="0 0 40 44"><path d="M5 1h17c14 0 15 19 4 23l13 19H29L18 25h-2v17H5z" fill="#999"/><path d="M5 1l5 3v38H5z" fill="#848484"/><path d="M16 9h5c6 0 6 9 0 9h-5z" fill="#e9e9e9"/><path d="M18 25l8-1 13 19z" fill="#b0b0b0"/></svg></div><i class="caret me-0" style="border-top-color:#888;border-width:5px 4px 0"></i></div>
<div class="d-flex" style="height:24px;padding-bottom:1px"><div class="sel d-flex align-items-center justify-content-between pe-1"><span data-w="50">Pièces (1)</span><svg width="9" height="6"><use href="#chev"/></svg></div><div class="d-flex align-items-center" style="color:#a5a5a5;padding-left:4px"><svg width="12" height="12" viewBox="0 0 12 12"><path d="M1 1h5v4H1zM1 7h4v4H1zM6 3h5v8H6zM6 6h5M8 6v5" fill="none" stroke="#999"/></svg><span data-w="84" style="margin-left:3px">Modifier le type</span></div></div>
<div class="d-flex" style="height:353px"><div class="rows">
<div class="prow"><div><span data-w="37">Service</span></div><div></div><div></div></div>
<div class="prow"><div><span data-w="96">Finition de la base</span></div><div></div><div></div></div>
<div class="prow"><div><span data-w="101">Finition du plafond</span></div><div></div><div></div></div>
<div class="prow"><div><span data-w="81">Finition du mur</span></div><div></div><div></div></div>
<div class="prow"><div><span data-w="75">Finition du sol</span></div><div></div><div></div></div>
<div class="prow bt"><div><span data-w="51">Occupant</span></div><div></div><div></div></div>
<div class="prow bt"><div><span data-w="62">PIECE_Code</span></div><div></div><div></div></div>
<div class="prow bt"><div><span data-w="98">PIECE_Elements_ID</span></div><div></div><div></div></div>
<div class="prow bt"><div><span data-w="103">PIECE_Surface_Prog</span></div><div></div><div></div></div>
<div class="prow bt"><div><span data-w="60">PIECE_Type</span></div><div></div><div></div></div>
<div class="prow dim"><div><span data-w="61">Modifié par</span></div><div><span data-w="31">bootc</span></div><div></div></div>
<div class="prow dim"><div><span data-w="48">Variantes</span></div><div><span data-w="85">Modèle de base</span></div><div></div></div>
<div class="phead d-flex justify-content-between"><span data-w="115">Phase de construction</span><svg class="mt-1" width="6" height="8"><use href="#fold"/></svg></div>
<div class="prow dim"><div><span data-w="31">Phase</span></div><div><span data-w="115">Nouvelle construction</span></div><div></div></div>
<div class="phead d-flex justify-content-between"><span data-w="78">Paramètres IFC</span><svg class="mt-1" width="6" height="8"><use href="#fold"/></svg></div>
<div class="prow"><div><span data-w="58">ZoneName</span></div><div><span data-w="65">REFECTOIRE</span></div><div></div></div>
</div>
<div class="d-flex flex-column align-items-center ms-auto" style="width:17px;background:#efefef"><svg width="9" height="6" style="margin-top:7px;transform:scaleY(-1)"><use href="#chev"/></svg><div style="width:16px;height:152px;margin-top:171px;background:#cdcdcd"></div><svg width="9" height="6" style="margin-top:6px"><use href="#chev"/></svg></div></div>
<div class="d-flex justify-content-between" style="height:25px;padding:1px 1px 2px 4px"><span data-w="103" style="color:#1c6fd0;text-decoration:underline;padding-top:2px">Aide des propriétés</span><div style="width:75px;background:#ccc;border:1px solid #bfbfbf;color:#888;padding:2px 0 0 10px"><span data-w="52">Appliquer</span></div></div>
<div class="d-flex align-items-center flex-fill" style="background:#cbcbcb;color:#4d4d4d"><span data-w="313" style="margin-left:6px">Arborescence du projet - JBK_CDL_ESQ_ARC_R20_00_bootc</span><div class="h-100" style="width:65px;margin-left:6px;background:#f4f4f4;color:#222;padding:3px 0 0 6px"><span data-w="54">Propriétés</span></div></div>
</aside></main>

<footer class="status">
<span data-w="221">Sous-projet 1 : Appareils sanitaires : Lavab</span>
<svg width="17" height="17" viewBox="0 0 17 17"><path d="M1 7l4-2 3 2v8l-4 1-3-1z" fill="#7ab7e6" stroke="#28679c"/><path d="M10 7l3-2 3 2v8l-3 1-3-1z" fill="#eee" stroke="#456"/><path d="M4 3q4-4 9 0l-2 2q-3-2-5 0z" fill="#2f9445"/><path d="M7 6v9" stroke="#2f9445" stroke-width="2"/></svg>
<div class="combo d-flex align-items-center justify-content-between"><span data-w="163">Sous-projet 1 (non modifiable)</span><svg width="8" height="6"><use href="#chev"/></svg></div>
<svg width="15" height="16" viewBox="0 0 15 16"><path d="M2 1h10l2 2-3 4-7 2z" fill="#ddd" stroke="#444"/><path d="M7 8L4 11l2 1M1 14q3-5 6 0z" stroke="#444" fill="#ccc"/></svg>
<span data-w="9">:0</span>
<svg width="17" height="16" viewBox="0 0 17 16"><path d="M1 1h15v13H1z" fill="#f3f3f3" stroke="#444"/><path d="M1 3h15" stroke="#444" stroke-width="2"/><path d="M4 7h2M8 7h6M5 10h2M9 10h5M9 12.500h5" stroke="#444"/></svg>
<svg width="17" height="16" viewBox="0 0 17 16"><path d="M2 1h14v12H2z" fill="#f3f3f3" stroke="#444"/><path d="M2 3h14M8 8h6M10 11h5" stroke="#444" stroke-width="1.500"/><path d="M0 9h4V6.500l4 4-4 4V12H0z" fill="#2378c8"/></svg>
<div class="combo d-flex align-items-center justify-content-between"><span data-w="85">Modèle de base</span><svg width="8" height="6"><use href="#chev"/></svg></div>
<div class="cb"><svg width="12" height="12" viewBox="0 0 12 12"><path d="M2 6l3 3 5-7" fill="none" stroke="#23962d" stroke-width="2.200"/></svg></div>
<span data-w="86">Exclure variantes</span>
<div class="cb"></div><span data-w="123">Modifiable uniquement</span>
<svg width="17" height="16" viewBox="0 0 17 16"><path d="M1 3q3-3 6 0 4-4 8 0v3H9L7 4 5 6H1z" fill="#f4b72c" stroke="#a87916"/><use href="#cur" x="6" y="3" width="9" height="13"/></svg>
<svg width="17" height="16" viewBox="0 0 17 16"><path d="M4 3h11l-3 4H1zM4 8h8M1 12h9" fill="#bde0f7" stroke="#2675b5" stroke-width="1.500"/><use href="#cur" x="8" y="3" width="9" height="13"/></svg>
<svg width="17" height="16" viewBox="0 0 17 16"><path d="M3 1h8v6l2 2H1l2-2z" fill="#f5905c" stroke="#b44a1b"/><path d="M6 9v6" stroke="#555"/><use href="#cur" x="8" y="3" width="9" height="13"/></svg>
<svg width="17" height="16" viewBox="0 0 17 16"><path d="M1 3l7-2v12l-7 2zM8 2h4v10" fill="#8fc7ef" stroke="#2675b5"/><use href="#cur" x="6" y="3" width="9" height="13"/></svg>
<svg width="17" height="16" viewBox="0 0 17 16"><path d="M5 0v10M0 5h10" stroke="#333" stroke-width="2"/><use href="#redx" x="8" y="0" width="8" height="8"/><use href="#cur" x="7" y="3" width="9" height="13"/></svg>
<svg width="15" height="15" viewBox="0 0 15 15"><circle cx="7" cy="7" r="5" fill="none" stroke="#999" stroke-width="3" stroke-dasharray="2.500 1.500"/></svg>
<svg width="17" height="16" viewBox="0 0 17 16"><path d="M1 1h15L10 8v6l-3-2V8z" fill="#d5d8dc" stroke="#555" stroke-width="1.300"/></svg>
<span data-w="9">:1</span>
</footer>

<div class="frame1 position-absolute"></div>
<div class="frame2 position-absolute"></div>
<div class="key k5 position-absolute">5</div>
<div class="key k6 position-absolute">6</div>

<script src="https://cdn.jsdelivr.net/npm/bootstrap@5.3.0/dist/js/bootstrap.bundle.min.js"></script>
<script>
// Furniture grid and bottom windows of the refectory
const columns = [139.3, 261.3, 384.7, 506.3, 621.5], lines = [334.3, 400.3, 465.3];
document.getElementById('tables').innerHTML = lines.map(y => columns.map(x => `<use href="#tbl" x="${x}" y="${y}"/>`).join('')).join('');
document.getElementById('sills').innerHTML = [190, 254, 363, 427, 537, 600].map(x => `<rect x="${x}" y="551.5" width="28.5" height="9"/>`).join('');
// Labels keep the width given in data-w by adjusting letter spacing
document.querySelectorAll('[data-w]').forEach(el => {
  const gap = (el.dataset.w - el.getBoundingClientRect().width) / el.textContent.length;
  el.style.letterSpacing = gap.toFixed(3) + 'px';
});
</script>
</body>
</html>
